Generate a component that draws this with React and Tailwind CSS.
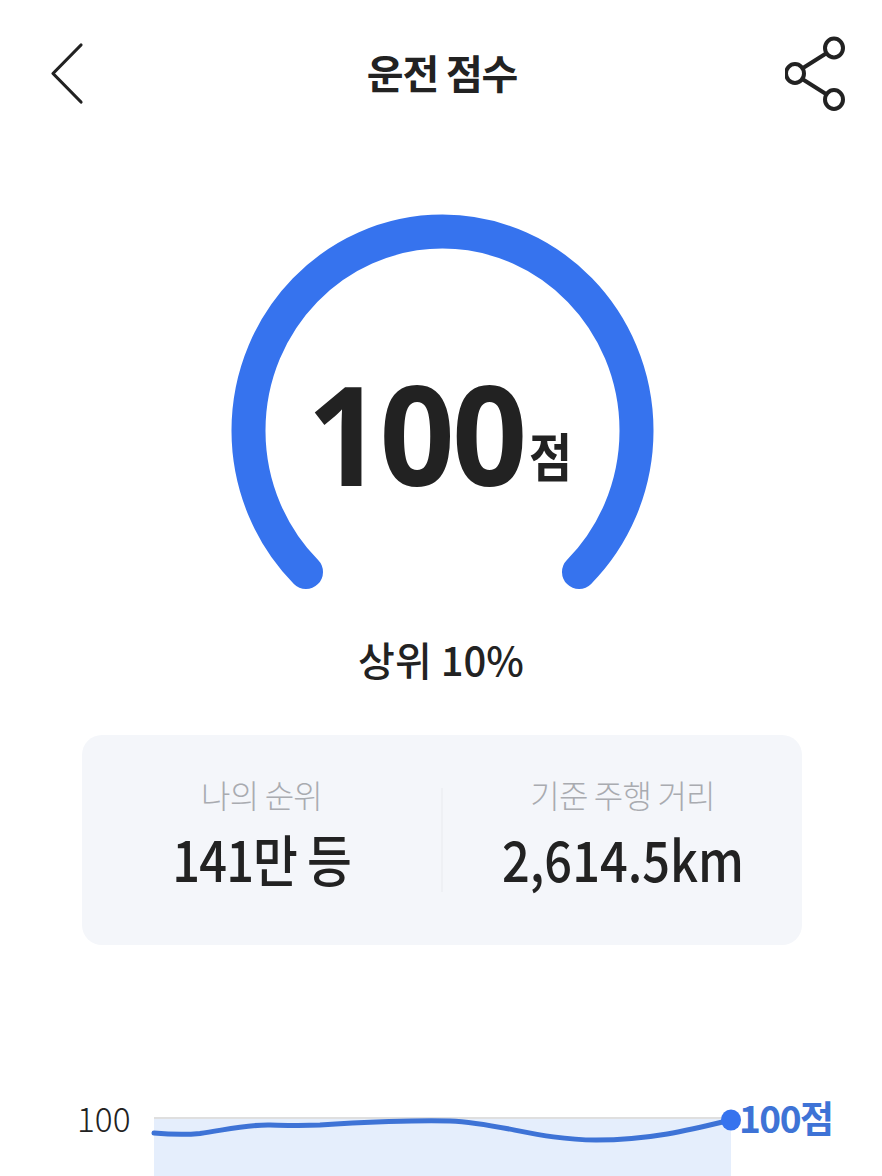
export default function App() {
  return (
    <div className="w-[882px] h-[1176px] overflow-hidden bg-white flex flex-col text-[#222222] font-['Noto_Sans_CJK_KR','Noto_Sans',sans-serif]">
      <header className="h-[146px] shrink-0 pl-[36px] pr-[36px] pt-[28px] flex items-start justify-between">
        <svg width="60" height="90" viewBox="0 0 60 90" fill="none" stroke="#222" strokeWidth="3.2" strokeLinecap="round" strokeLinejoin="round">
          <path d="M45 17 L17 45.5 L45 74" />
        </svg>
        <h1 className="text-[40px] leading-[90px] font-bold tracking-[-1.2px] ml-[3px] -mt-[1px]">운전 점수</h1>
        <svg width="61" height="90" viewBox="0 0 61 90" fill="none" stroke="#222" strokeWidth="4">
          <ellipse cx="49" cy="20" rx="9" ry="9.5" />
          <ellipse cx="10" cy="45.5" rx="9" ry="9.5" />
          <ellipse cx="49" cy="71.5" rx="9" ry="9.5" />
          <path d="M18 40 L41 25.5 M18 51.5 L41 66" />
        </svg>
      </header>

      <section className="relative h-[447px] shrink-0">
        <svg className="block" width="882" height="447" viewBox="0 0 882 447" fill="none">
          <path d="M306 426 A194 199 0 1 1 579 426" stroke="#3673ee" strokeWidth="34" strokeLinecap="round" />
        </svg>
        <div className="absolute left-[307px] top-[201px] flex items-end">
          <span className="text-[138px] leading-[170px] font-bold font-['Noto_Sans',sans-serif] tracking-[-3px] origin-left scale-x-[0.955]">100</span>
          <span className="text-[52px] leading-[60px] font-bold mb-[32px] -ml-[6px] origin-left scale-x-[0.9]">점</span>
        </div>
      </section>

      <p className="h-[142px] shrink-0 pt-[38px] text-center text-[40px] leading-[56px] font-medium">상위 10%</p>

      <section className="ml-[82px] w-[720px] h-[210px] shrink-0 rounded-[20px] bg-[#f4f6fa] flex items-start pt-[37px]">
        <div className="flex-1 flex flex-col items-center">
          <span className="text-[32px] leading-[44px] font-light text-[#a9abb0] tracking-[-0.8px]">나의 순위</span>
          <span className="mt-[4px] text-[56px] leading-[76px] font-medium tracking-[-1px] scale-x-[0.87]">141만 등</span>
        </div>
        <div className="w-[2px] h-[104px] mt-[16px] bg-[#eef0f4]" />
        <div className="flex-1 flex flex-col items-center">
          <span className="text-[32px] leading-[44px] font-light text-[#a9abb0] tracking-[-0.8px]">기준 주행 거리</span>
          <span className="mt-[4px] text-[56px] leading-[76px] font-medium scale-x-[0.87]">2,614.5km</span>
        </div>
      </section>

      <section className="mt-[145px] pl-[77px] flex items-start">
        <span className="w-[77px] shrink-0 mt-[6px] text-[34px] leading-[44px] font-light origin-left scale-x-[0.98]">100</span>
        <svg className="block shrink-0 overflow-visible" width="590" height="86" viewBox="154 0 590 86" fill="none">
          <rect x="154" y="27" width="577" height="3" fill="#dfdfdf" />
          <rect x="154" y="29" width="577" height="57" fill="#e5eefc" />
          <path d="M154 43 C170 44.5 185 45 200 43.5 C225 40 245 34.5 270 35 C290 35.5 300 36 320 35 C360 32 420 30 450 31 C500 33 540 50 596 50 C650 50 690 40 731 30" stroke="#3e73d6" strokeWidth="5" strokeLinecap="round" />
          <ellipse cx="731" cy="30" rx="10" ry="10.5" fill="#3673ee" />
        </svg>
        <span className="-ml-[5px] mt-[3px] text-[37px] leading-[48px] font-bold text-[#3e73d6] tracking-[-1.5px] shrink-0">100점</span>
      </section>
    </div>
  );
}
